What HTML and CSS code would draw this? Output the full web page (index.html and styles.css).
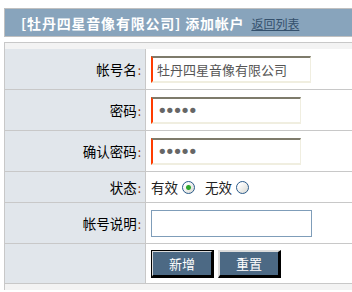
FILE: index.html
```html
<!DOCTYPE html>
<html lang="zh-CN">
<head>
    <meta charset="UTF-8">
    <meta name="viewport" content="width=device-width, initial-scale=1.0">
    <title>添加帐户</title>
    <link rel="stylesheet" href="styles.css">
</head>
<body>
    <div class="page">
        <div class="title-bar">
            <span class="title">[牡丹四星音像有限公司] 添加帐户</span>
            <a href="#" class="back-link">返回列表</a>
        </div>
        <form class="form-table" id="new-account-form">
            <div class="form-row">
                <label class="field-label" for="account">帐号名<span class="colon">:</span></label>
                <div class="field-value">
                    <input type="text" id="account" class="text-input required wide" value="牡丹四星音像有限公司">
                </div>
            </div>
            <div class="form-row">
                <label class="field-label" for="password">密码<span class="colon">:</span></label>
                <div class="field-value">
                    <input type="password" id="password" class="text-input required" value="12345">
                </div>
            </div>
            <div class="form-row">
                <label class="field-label" for="confirm">确认密码<span class="colon">:</span></label>
                <div class="field-value">
                    <input type="password" id="confirm" class="text-input required" value="12345">
                </div>
            </div>
            <div class="form-row short">
                <label class="field-label">状态<span class="colon">:</span></label>
                <div class="field-value status">
                    <label class="radio-label">有效 <input type="radio" name="status" value="1" checked></label>
                    <label class="radio-label">无效 <input type="radio" name="status" value="0"></label>
                </div>
            </div>
            <div class="form-row">
                <label class="field-label" for="remark">帐号说明<span class="colon">:</span></label>
                <div class="field-value">
                    <input type="text" id="remark" class="text-input plain">
                </div>
            </div>
            <div class="form-row last">
                <div class="field-label"></div>
                <div class="field-value buttons">
                    <button type="submit" class="btn default">新增</button>
                    <button type="reset" class="btn">重置</button>
                </div>
            </div>
        </form>
    </div>
</body>
</html>
```

FILE: styles.css
```css
html, body {
    margin: 0;
    padding: 0;
    overflow: hidden;
}

body {
    font-family: "Noto Sans CJK SC", "Liberation Sans", sans-serif;
    background-color: #ffffff;
    color: #000000;
}

.page {
    margin: 8px 0 0 4px;
    width: 420px;
}

/* header */
.title-bar {
    box-sizing: border-box;
    height: 29px;
    border: 1px solid #c0c0c0;
    background-color: #88a4bc;
    padding-left: 16px;
    display: flex;
    align-items: center;
}

.title {
    color: #ffffff;
    font-weight: bold;
    font-size: 14px;
    letter-spacing: 0.8px;
}

.back-link {
    margin-left: 7px;
    color: #34506c;
    font-size: 12px;
    text-decoration: underline;
    margin-top: 2px;
}

/* form table */
.form-table {
    margin-top: 5px;
    border: 1px solid #c8c8c8;
    border-bottom: none;
    padding: 6px 0 6px 0;
    background-color: #f3f3f3;
}

.form-row {
    display: grid;
    grid-template-columns: 141px 1fr;
    min-height: 40px;
    border-bottom: 1px solid #c8c8c8;
}

.form-row.short {
    min-height: 30px;
}

.form-row.last {
    min-height: 39px;
}

.field-label {
    box-sizing: border-box;
    background-color: #e1e6eb;
    border-right: 1px solid #c8c8c8;
    display: flex;
    justify-content: flex-end;
    align-items: center;
    padding-right: 4px;
    font-size: 13.5px;
}

.colon {
    color: #993300;
    font-size: 12px;
    margin-left: 1px;
}

.field-value {
    background-color: #ffffff;
    display: flex;
    align-items: center;
    padding-left: 5px;
}

.text-input {
    box-sizing: border-box;
    height: 27px;
    width: 150px;
    padding: 0 4px;
    margin: 0;
    font-family: "Noto Sans CJK SC", sans-serif;
    font-size: 13px;
    color: #555555;
    background-color: #ffffff;
    outline: none;
}

.text-input.wide {
    width: 160px;
}

.text-input.required {
    border-style: solid;
    border-width: 2px 1px 2px 2px;
    border-color: #7e7b6b #f0eee0 #f0eee0 #ff3c00;
}

input[type="password"].text-input {
    font-family: "DejaVu Sans", sans-serif;
    font-size: 18px;
    letter-spacing: -3px;
    color: #666666;
}

.text-input.plain {
    width: 161px;
    border: 1px solid #7f9db9;
}

/* status radios */
.status {
    font-size: 13.5px;
    color: #222222;
}

.radio-label {
    display: flex;
    align-items: center;
    margin-right: 10px;
}

.radio-label input {
    appearance: none;
    -webkit-appearance: none;
    box-sizing: border-box;
    width: 13px;
    height: 13px;
    margin: 0 0 0 4px;
    border: 1px solid #2a5a8a;
    border-radius: 50%;
    background: linear-gradient(135deg, #ffffff 20%, #d8d8d2 100%);
}

.radio-label input:checked {
    background:
        radial-gradient(circle, #2ea82e 0, #2ea82e 2px, transparent 3px),
        linear-gradient(135deg, #ffffff 20%, #d8d8d2 100%);
}

/* buttons */
.buttons {
    gap: 4px;
}

.btn {
    box-sizing: border-box;
    width: 63px;
    height: 28px;
    padding: 0;
    margin: 0;
    background-color: #4c6984;
    color: #ffffff;
    font-family: "Noto Sans CJK SC", sans-serif;
    font-size: 13px;
    border-style: solid;
    border-width: 2px 3px 3px 2px;
    border-color: #dcdcdc #000000 #000000 #dcdcdc;
}

.btn.default {
    outline: 1px solid #000000;
    outline-offset: -1px;
}
```
